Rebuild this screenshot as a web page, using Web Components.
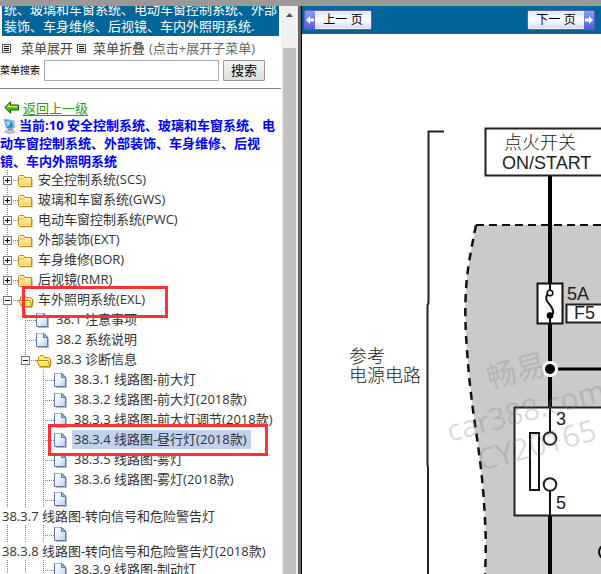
<!DOCTYPE html>
<html lang="zh-CN">
<head>
<meta charset="utf-8">
<title>菜单</title>
<style>
html, body { margin: 0; height: 100%; }
body { font: 13px/20px "Open Sans", "Noto Sans CJK SC", sans-serif; color: #333; background: #fff; overflow: hidden; }
</style>
</head>
<body>
<manual-app></manual-app>
<script>
const define = (name, html, setup) => {
  const tpl = document.createElement('template');
  tpl.innerHTML = html;
  customElements.define(name, class extends HTMLElement {
    constructor() {
      super();
      this.attachShadow({ mode: 'open' }).append(tpl.content.cloneNode(true));
    }
    connectedCallback() { if (setup) setup(this, this.shadowRoot); }
  });
};

const icons = {
  folder: `<svg width="16" height="16" viewBox="0 0 16 16"><defs><linearGradient id="f" x1="0" y1="0" x2="0" y2="1"><stop offset="0" stop-color="#fff6b8"/><stop offset="1" stop-color="#ffcf5c"/></linearGradient></defs><path d="M1.500 13.500V3.500L2.500 2.500H6.500L7.500 4.500H13.500L14.500 5.500V13.500Z" fill="#9a9a9a" opacity=".5" transform="translate(.7 1)"/><path d="M.5 12.500V3.500L1.500 2.500H5.500L7 4.500H13.500V13.500H1.500Z" fill="url(#f)" stroke="#c08a1c"/><path d="M1.500 6H5L6.500 4.800" fill="none" stroke="#e0b040"/><path d="M1.500 7V12.500H12.500" fill="none" stroke="#fff3b0" opacity=".6"/></svg>`,
  open: `<svg width="16" height="16" viewBox="0 0 16 16"><path d="M3 14.500H14L15.500 8" fill="none" stroke="#999" opacity=".7"/><path d="M2.500 12V4L4 2.500H7L8.500 4.500H12.500L14.500 6V12.500Z" fill="#ffe98e" stroke="#b88a10"/><path d="M.5 7.500H12L14 13.500H4Z" fill="#ffe45e" stroke="#b88a10"/><path d="M2.500 8.500H11" stroke="#fffbd0"/></svg>`,
  file: `<svg width="14" height="16" viewBox="0 0 14 16"><defs><linearGradient id="p" x1="0" y1="0" x2="1" y2="1"><stop offset="0" stop-color="#fff"/><stop offset=".4" stop-color="#eef5ff"/><stop offset="1" stop-color="#b5cff5"/></linearGradient></defs><path d="M2 14.500H12.500V5" fill="none" stroke="#888" opacity=".6"/><path d="M.5 .5H8L11.500 4V13.500H.5Z" fill="url(#p)" stroke="#5f78b8"/><path d="M1 .5H7.500" stroke="#9ab8ea"/><path d="M7.500 .5V4.500H11.500Z" fill="#9db8ea" stroke="#5f78b8"/></svg>`
};

define('tree-row', `
<style>
:host { display: flex; height: 20px; position: relative; white-space: nowrap; }
:host([bare]) { height: 18px; }
.rail { width: 18px; flex: none; position: relative; display: grid; grid-template-rows: 1fr; align-items: center;
  background: repeating-linear-gradient(#808080 0 1px, transparent 1px 2px) 7px 0 / 1px 100% no-repeat; }
.rail.end { background:
  repeating-linear-gradient(#808080 0 1px, transparent 1px 2px) 7px 0 / 1px 100% no-repeat,
  repeating-linear-gradient(90deg, #808080 0 1px, transparent 1px 2px) 7px 10px / 11px 1px no-repeat; }
button { appearance: none; margin: 1px 0 0 3px; padding: 0; width: 9px; height: 9px; border: 1px solid #777; border-radius: 0;
  background: linear-gradient(#000, #000) 1px 3px / 5px 1px no-repeat, #fff; }
button.plus { background: linear-gradient(#000, #000) 1px 3px / 5px 1px no-repeat, linear-gradient(#000, #000) 3px 1px / 1px 5px no-repeat, #fff; }
.icon { width: 18px; flex: none; display: flex; align-items: center; padding-top: 1px; }
a { color: #333; text-decoration: none; line-height: 19px; height: 19px; padding: 0 2px; }
:host([selected]) a { background: #c1d2ee; padding-right: 4px; }
.mark { position: absolute; box-sizing: border-box; border: 3px solid #f33; height: 32px; top: -4px; z-index: 2; pointer-events: none; }
:host([mark="a"]) .mark { left: 22px; width: 146px; }
:host([mark="b"]) .mark { left: 48px; width: 220px; top: -6px; }
:host(:not([mark])) .mark { display: none; }
</style>
<a href="#"><slot></slot></a><span class="mark"></span>`, (el, root) => {
  const level = +(el.getAttribute('level') || 0), type = el.getAttribute('type') || 'folder';
  const link = root.querySelector('a');
  for (let i = 0; i <= level; i++) {
    const r = document.createElement('span');
    r.className = 'rail' + (i === level ? ' end' : '');
    if (i === level && type !== 'file') {
      const b = document.createElement('button');
      b.type = 'button';
      b.className = type === 'folder' ? 'plus' : '';
      b.setAttribute('aria-expanded', type === 'open');
      r.append(b);
    }
    link.before(r);
  }
  const icon = document.createElement('span');
  icon.className = 'icon';
  icon.innerHTML = icons[type];
  link.before(icon);
  if (el.hasAttribute('bare')) link.remove();
});

define('tree-line', `
<style>:host { display: block; height: 17px; line-height: 17px; padding-left: 2px; white-space: nowrap; } a { color: #333; text-decoration: none; }</style>
<a href="#"><slot></slot></a>`);

define('menu-header', `
<style>:host { display: flex; flex-direction: column; justify-content: flex-end; height: 30px; margin: 0 2px; padding: 0 0 0 2px; box-sizing: border-box;
  overflow: hidden; background: #069; color: #fff; line-height: 17px; white-space: nowrap; } div { padding-bottom: 1px; }</style>
<div><slot></slot></div>`);

define('menu-tools', `
<style>
:host { display: block; }
.row { display: flex; align-items: center; height: 24px; padding-left: 2px; white-space: nowrap; }
a { color: #444; text-decoration: none; display: flex; align-items: center; gap: 10px; margin-right: 4px; }
.hint { color: #666; }
form { display: flex; align-items: center; height: 20px; margin: 0; padding: 0 0 8px; }
label { font-size: 10px; color: #000; width: 44px; white-space: nowrap; }
input { box-sizing: border-box; width: 175px; height: 21px; border: 1px solid #aaa; padding: 1px 2px; margin: 0 4px 0 0; font: inherit; background: #fff; }
button { box-sizing: border-box; width: 42px; height: 21px; border: 1px solid #999; border-radius: 1px; padding: 0; font: inherit; line-height: 17px; color: #000; background: linear-gradient(#f6f6f6, #dedede); }
hr { margin: 0; border: 0; height: 1px; background: #808080; }
</style>
<div class="row">
  <a href="#"><svg width="9" height="9"><rect x=".5" y=".5" width="8" height="8" fill="#fff" stroke="#555"/><path d="M2 2.500H7M2 4.500H7M2 6.500H7" stroke="#000"/></svg>菜单展开</a>
  <a href="#" style="gap:7px"><svg width="9" height="9"><rect x=".5" y=".5" width="8" height="8" fill="#fff" stroke="#555"/><path d="M2 2.500H7M2 4.500H7M2 6.500H7" stroke="#000"/></svg>菜单折叠</a>
  <span class="hint">(点击+展开子菜单)</span>
</div>
<form><label for="q">菜单搜索</label><input id="q" type="text"><button type="button">搜索</button></form>
<hr>`);

define('menu-path', `
<style>
:host { display: block; padding-top: 10px; white-space: nowrap; }
.back { display: flex; align-items: center; gap: 4px; height: 17px; padding-left: 4px; }
.back a { color: #2e9a0c; text-underline-offset: 2px; }
.now { font-weight: 700; color: #00f; line-height: 18px; }
.now svg { vertical-align: -4px; margin: 0 1px 0 2px; }
</style>
<div class="back"><svg width="15" height="13" viewBox="0 0 15 13"><path d="M.8 6.500L6.500 .8V4H14.500V9H6.500V12.200Z" fill="#3bbf1c" stroke="#145c08"/><path d="M2.500 6.300L5.700 3V5H13.500V6.300Z" fill="#e4f23a"/></svg><a href="#">返回上一级</a></div>
<div class="now"><svg width="16" height="16" viewBox="0 0 16 16"><path d="M2 1L10 2.500L12 10L4.500 10.500Z" fill="#1d8be0" stroke="#a9bdd8"/><path d="M3.500 2.500L9 3.500L7 8L5 8.500Z" fill="#8fd8ff"/><path d="M10 2.500L12.500 2L13.500 9.500L12 10Z" fill="#b3bfd6"/><path d="M6 10.500H11V13H6Z" fill="#8390b8"/><ellipse cx="8" cy="13.700" rx="5" ry="1.700" fill="#c4cbe2" stroke="#8b93b8" stroke-width=".7"/></svg>当前:10 安全控制系统、玻璃和车窗系统、电<br>动车窗控制系统、外部装饰、车身维修、后视<br>镜、车内外照明系统</div>`);

define('frame-scroll', `
<style>
:host { display: flex; flex-direction: column; align-items: center; background: #f0f0f0; }
svg { margin: 7px 0 31px; flex: none; }
.thumb { flex: 1; width: 13px; background: #c1c1c1; }
</style>
<svg width="7" height="4"><path d="M0 4L3.500 0L7 4Z" fill="#505050"/></svg><div class="thumb"></div>`);

define('page-button', `
<style>
button { display: flex; align-items: stretch; box-sizing: border-box; height: 20px; width: 68px; padding: 0; margin: 0; border: 1px solid #5a5fc0; border-radius: 2px;
  background: linear-gradient(#dfe0ff, #fff 50%, #cfd2fa); font: 400 12px/18px "Liberation Sans", "Noto Sans CJK SC", sans-serif; color: #000; box-shadow: inset 0 0 0 1px #f4f4ff; }
.arrow { width: 10px; display: grid; place-items: center; background: linear-gradient(#8f9bf0, #4d5fd8); }
.text { flex: 1; white-space: nowrap; }
:host([next]) button { flex-direction: row-reverse; }
:host([next]) svg { transform: scaleX(-1); }
</style>
<button type="button"><span class="arrow"><svg width="8" height="8"><path d="M0 4L4 0V2.500H8V5.500H4V8Z" fill="#fff"/></svg></span><span class="text"><slot></slot></span></button>`);

define('page-nav', `
<style>:host { display: flex; justify-content: space-between; align-items: center; height: 28px; background: #069; padding: 0 6px 0 2px; box-sizing: border-box; }</style>
<page-button>上一 页</page-button><page-button next>下一 页</page-button>`);

define('circuit-diagram', `
<style>
:host { display: block; overflow: hidden; background: #fff; }
svg { display: block; }
text { font-family: "Liberation Sans", "Noto Sans CJK SC", sans-serif; font-size: 18px; fill: #222; }
.cn { font-weight: 300; }
.wm text { font-family: "Open Sans", "Noto Sans CJK SC", sans-serif; font-size: 30px; fill: #808080; fill-opacity: .3; }
</style>
<svg width="598" height="540" viewBox="302 34 598 540" fill="none" stroke="none">
  <path d="M476 225H900V574H485C486 555 486 535 485 520C483 480 480 460 477 438C472 405 469 380 467 350C465 325 465 305 466 290C467 270 471 250 476 225Z" fill="#cacaca"/>
  <path d="M476 225H900" stroke="#111" stroke-width="2" stroke-dasharray="8 5"/>
  <path d="M476 225C471 250 467 270 466 290C465 305 465 325 467 350C469 380 472 405 477 438C480 460 483 480 485 520C486 535 486 555 485 574" stroke="#111" stroke-width="2.500" stroke-dasharray="8 6"/>
  <path d="M444 131.500H428.500V303L427.500 305V465L428 467V574" stroke="#222" stroke-width="2"/>
  <rect x="485.500" y="128.500" width="130" height="47" fill="#fff" stroke="#222" stroke-width="2"/>
  <path d="M550 176V284M550 323V362M550 377V407M550 515V574" stroke="#000" stroke-width="4"/>
  <rect x="537.500" y="283.500" width="25" height="40" fill="#fff" stroke="#111" stroke-width="2"/>
  <path d="M550 284V290M550 315V323M547.500 294C542 303 555 304 553 314" stroke="#111" stroke-width="2"/>
  <circle cx="550" cy="293" r="2.800" fill="#fff" stroke="#111" stroke-width="1.600"/>
  <circle cx="550" cy="315.500" r="3.300" fill="#000"/>
  <rect x="566.500" y="304.500" width="40" height="18" fill="#fff" stroke="#222" stroke-width="2"/>
  <circle cx="550" cy="369" r="8" fill="#fff"/><circle cx="550" cy="369" r="5" fill="#000"/>
  <path d="M558 369H900" stroke="#000" stroke-width="3"/>
  <rect x="514.500" y="407.500" width="300" height="108" fill="#fff" stroke="#222" stroke-width="2"/>
  <path d="M550 407V432M550 491V516" stroke="#111" stroke-width="2"/>
  <rect x="530" y="433" width="9" height="57" fill="#fff" stroke="#111" stroke-width="2"/>
  <circle cx="550" cy="438.500" r="6.300" fill="#fff" stroke="#222" stroke-width="2"/>
  <circle cx="550" cy="484.500" r="6.300" fill="#fff" stroke="#222" stroke-width="2"/>
  <circle cx="606" cy="552" r="7" stroke="#111" stroke-width="2"/>
  <text class="cn" x="504" y="149">点火开关</text>
  <text x="502" y="169">ON/START</text>
  <text x="567" y="300">5A</text><text x="574" y="319">F5</text>
  <text x="556" y="425">3</text><text x="556" y="509">5</text>
  <text class="cn" x="349" y="363">参考</text><text class="cn" x="349" y="382">电源电路</text>
  <g class="wm">
    <text transform="translate(490 389) rotate(-15)">畅易</text>
    <text transform="translate(450 442) rotate(-15)">car388.com</text>
    <text transform="translate(481 471) rotate(-15)">CY20165</text>
  </g>
</svg>`);

define('manual-app', `
<style>
:host { display: grid; grid-template: 6px minmax(0, 1fr) / 281px 17px 4px minmax(0, 1fr); height: 100%; }
.top { grid-column: 1 / -1; background: #999; }
.menu, .view { overflow: hidden; min-height: 0; }
.view { display: flex; flex-direction: column; }
circuit-diagram { flex: 1; min-height: 0; }
.split { background: linear-gradient(90deg, #666 75%, #000 75%); }
</style>
<div class="top"></div>
<div class="menu">
  <menu-header>统、玻璃和车窗系统、电动车窗控制系统、外部<br>装饰、车身维修、后视镜、车内外照明系统.</menu-header>
  <menu-tools></menu-tools>
  <menu-path></menu-path>
  <nav>
    <tree-row>安全控制系统(SCS)</tree-row>
    <tree-row>玻璃和车窗系统(GWS)</tree-row>
    <tree-row>电动车窗控制系统(PWC)</tree-row>
    <tree-row>外部装饰(EXT)</tree-row>
    <tree-row>车身维修(BOR)</tree-row>
    <tree-row>后视镜(RMR)</tree-row>
    <tree-row type="open" mark="a">车外照明系统(EXL)</tree-row>
    <tree-row level="1" type="file">38.1 注意事项</tree-row>
    <tree-row level="1" type="file">38.2 系统说明</tree-row>
    <tree-row level="1" type="open">38.3 诊断信息</tree-row>
    <tree-row level="2" type="file">38.3.1 线路图-前大灯</tree-row>
    <tree-row level="2" type="file">38.3.2 线路图-前大灯(2018款)</tree-row>
    <tree-row level="2" type="file">38.3.3 线路图-前大灯调节(2018款)</tree-row>
    <tree-row level="2" type="file" selected mark="b">38.3.4 线路图-昼行灯(2018款)</tree-row>
    <tree-row level="2" type="file">38.3.5 线路图-雾灯</tree-row>
    <tree-row level="2" type="file">38.3.6 线路图-雾灯(2018款)</tree-row>
    <tree-row level="2" type="file" bare></tree-row>
    <tree-line>38.3.7 线路图-转向信号和危险警告灯</tree-line>
    <tree-row level="2" type="file" bare></tree-row>
    <tree-line>38.3.8 线路图-转向信号和危险警告灯(2018款)</tree-line>
    <tree-row level="2" type="file">38.3.9 线路图-制动灯</tree-row>
  </nav>
</div>
<frame-scroll></frame-scroll>
<div class="split"></div>
<div class="view"><page-nav></page-nav><circuit-diagram></circuit-diagram></div>`);
</script>
</body>
</html>
